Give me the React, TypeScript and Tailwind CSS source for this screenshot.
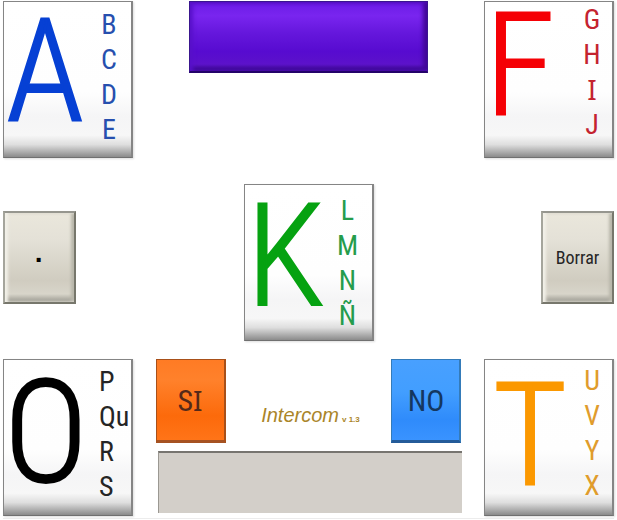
import React from "react";

type LetterKeyProps = {
  main: string;
  others: string[];
  mainClass: string;
  listClass: string;
};

const narrow = "font-['Roboto_Condensed','Roboto',sans-serif]";
const serifedI = "font-['Noto_Sans',sans-serif]";

function LetterKey({ main, others, mainClass, listClass }: LetterKeyProps) {
  return (
    <button
      type="button"
      className="flex h-[157px] w-[130px] shrink-0 justify-between border border-[#858585] border-r-2 border-b-[#707070] bg-[linear-gradient(to_bottom,#fff_0%,#fefefe_58%,#f5f5f6_74%,#f7f7f7_86%,#dedede_92%,#8b8b8b_100%)] shadow-[1px_1px_2px_#ddd]"
    >
      <span className={`${narrow} text-[142px] leading-[128px] font-light [-webkit-text-stroke:2px_currentColor] ${mainClass}`}>{main}</span>
      <span className={`${narrow} flex flex-col text-[28px] leading-[35px] ${listClass}`}>
        {others.map((letter) => (
          <span key={letter} className={letter === "I" ? serifedI : ""}>{letter}</span>
        ))}
      </span>
    </button>
  );
}

const grayKey =
  "mt-[27px] flex h-[93px] w-[73px] shrink-0 items-center justify-center border-2 border-t-[#96968f] border-l-[#a5a59c] border-r-[#77776c] border-b-[#77776c] bg-[linear-gradient(to_bottom,#eae7dc_0%,#e4e1d7_30%,#d0ccc0_76%,#d8d5ca_91%,#99988e_100%)] shadow-[inset_3px_0_3px_#f2f0e8,inset_-3px_0_3px_#b8b6aa]";

const answerKey = "h-[84px] w-[70px] border border-r-2 border-b-[3px] text-[30px]";

export default function App() {
  return (
    <main className="flex flex-col bg-white px-[3px] pt-px text-black">
      <div className="flex items-start justify-between">
        <LetterKey main="A" others={["B", "C", "D", "E"]} mainClass="pl-[2px] pt-[6px] text-[#0640d4]" listClass="mr-[6px] w-[32px] items-center pt-[5px] text-[#264fae]" />
        <button
          type="button"
          aria-label="Intercom"
          className="h-[72px] w-[239px] border border-[#3a168e] border-b-2 border-b-[#240369] bg-[linear-gradient(to_bottom,#6b1ce6_0%,#7925ef_20%,#6517dc_45%,#570bd0_72%,#5c12ca_90%,#330783_100%)] shadow-[inset_3px_0_4px_#5710c9,inset_-4px_0_4px_#400796]"
        />
        <LetterKey main="F" others={["G", "H", "I", "J"]} mainClass="text-[#f50005]" listClass="mr-[4px] w-[32px] items-center text-[#c4232f]" />
      </div>

      <div className="mt-[26px] flex items-start justify-between">
        <button type="button" className={`${grayKey} pt-[4px] font-['Liberation_Sans',sans-serif] text-[28px] font-bold`}>·</button>
        <LetterKey main="K" others={["L", "M", "N", "Ñ"]} mainClass="pl-[2px] pt-[8px] text-[#06a211]" listClass="mr-[8px] w-[32px] items-center pt-[8px] text-[#259c4c]" />
        <button type="button" className={`${grayKey} ${narrow} text-[18px] text-[#252525]`}>Borrar</button>
      </div>

      <div className="mt-[18px] flex items-start justify-between">
        <LetterKey main="O" others={["P", "Qu", "R", "S"]} mainClass="pt-[10px] text-black" listClass="w-[32px] items-start pt-[4px] text-[#252525]" />
        <div className="flex w-[306px] flex-col gap-[8px]">
          <div className="flex items-center justify-between">
            <button type="button" className={`${narrow} ${answerKey} border-[#a85019] border-b-[#a65222] bg-[linear-gradient(to_bottom,#ff7b24,#ff812b_25%,#fc6a0b_70%,#ff7418)] text-[#542919]`}>
              S<span className={`${serifedI} text-[28px] leading-[30px]`}>I</span>
            </button>
            <p className="pt-[32px] pl-[4px] font-['Liberation_Sans',sans-serif] text-[20px] leading-[30px] text-[#aa8529] italic">
              Intercom<span className="ml-[3px] text-[8px] font-bold not-italic">v 1.3</span>
            </p>
            <button type="button" className={`${narrow} ${answerKey} border-[#347bb9] border-b-[#245b99] bg-[linear-gradient(to_bottom,#48a0ff,#429eff_40%,#2f8bfb_75%,#3993ff)] text-[#14375f]`}>NO</button>
          </div>
          <input type="text" aria-label="Mensaje" className="ml-[2px] h-[62px] border-t-2 border-l border-t-[#777570] border-l-[#9b9892] bg-[#d3cfc9] px-2 text-[24px] outline-none" />
        </div>
        <LetterKey main="T" others={["U", "V", "Y", "X"]} mainClass="pl-[8px] pt-[12px] text-[#fb9800]" listClass="mr-[4px] w-[32px] items-center pt-[3px] text-[#e09c2c]" />
      </div>
      <div className="mt-[2px] h-px bg-[#ececec]" />
    </main>
  );
}
